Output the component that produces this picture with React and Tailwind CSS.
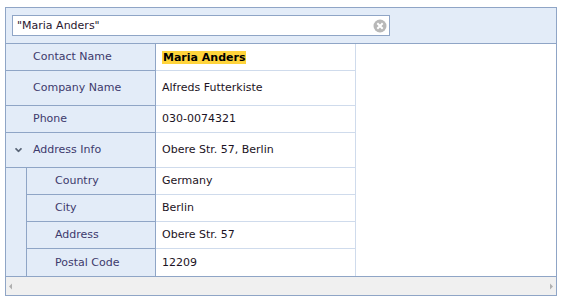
import React from 'react';

const dark = 'border-[#8fa5c6]';
const light = 'border-[#cfdbec]';

const Row = ({ label, value, tall, last, indent, chevron, children }) => (
  <div className={`flex ${tall ? 'h-[35px]' : 'h-[27px]'}`}>
    <div
      className={`flex items-center pt-px bg-[#e3ecf8] border-r ${dark} ${last ? '' : `border-b ${dark}`} ${
        indent ? 'w-[129px] pl-[28px]' : 'w-[150px] pl-[27px]'
      } text-[#3d3a6c] relative`}
    >
      {chevron && (
        <svg className="absolute left-[9px] top-1/2 -translate-y-1/2" width="7" height="5" viewBox="0 0 7 5">
          <path d="M0.5 0.8 L3.5 3.8 L6.5 0.8" fill="none" stroke="#5a6577" strokeWidth="1.8" />
        </svg>
      )}
      {label}
    </div>
    <div className={`flex items-center pt-px w-[200px] pl-[6px] border-r ${light} ${last ? '' : `border-b ${light}`} text-[#1c1324]`}>
      {children || value}
    </div>
  </div>
);

const App = () => {
  return (
    <div className="w-[566px] h-[301px] bg-white pt-[7px] pl-[5px]" style={{ fontFamily: '"DejaVu Sans", Verdana, sans-serif' }}>
      <div className={`w-[552px] border ${dark} text-[11px]`}>
        <div className={`bg-[#e3ecf8] px-[6px] py-[7px] border-b ${dark}`}>
          <div className={`w-[378px] h-[21px] bg-white border ${dark} flex items-center justify-between pl-[4px] pr-[2px]`}>
            <span className="text-[#2a1730] pt-px">"Maria Anders"</span>
            <svg width="14" height="14" viewBox="0 0 14 14">
              <circle cx="7" cy="7" r="6.5" fill="#b8b8b8" />
              <path d="M4.3 4.3 L9.7 9.7 M9.7 4.3 L4.3 9.7" stroke="#fff" strokeWidth="2" />
            </svg>
          </div>
        </div>
        <div className="flex flex-col">
          <Row label="Contact Name">
            <span className="bg-[#ffd43b] font-bold leading-[13px] px-px text-black">Maria Anders</span>
          </Row>
          <Row label="Company Name" value="Alfreds Futterkiste" tall />
          <Row label="Phone" value="030-0074321" />
          <Row label="Address Info" value="Obere Str. 57, Berlin" tall chevron />
          <div className="flex">
            <div className={`w-[21px] bg-[#e3ecf8] border-r ${dark}`} />
            <div className="flex flex-col">
              <Row label="Country" value="Germany" indent />
              <Row label="City" value="Berlin" indent />
              <Row label="Address" value="Obere Str. 57" indent />
              <Row label="Postal Code" value="12209" indent last />
            </div>
          </div>
        </div>
        <div className={`h-[19px] border-t ${dark} bg-[#f0f0f0] flex items-center justify-between px-[2px]`}>
          <svg width="5" height="7" viewBox="0 0 5 7">
            <path d="M4 0.5 L1 3.5 L4 6.5 Z" fill="#b0b0b0" />
          </svg>
          <svg width="5" height="7" viewBox="0 0 5 7">
            <path d="M1 0.5 L4 3.5 L1 6.5 Z" fill="#b0b0b0" />
          </svg>
        </div>
      </div>
    </div>
  );
};

export default App;
